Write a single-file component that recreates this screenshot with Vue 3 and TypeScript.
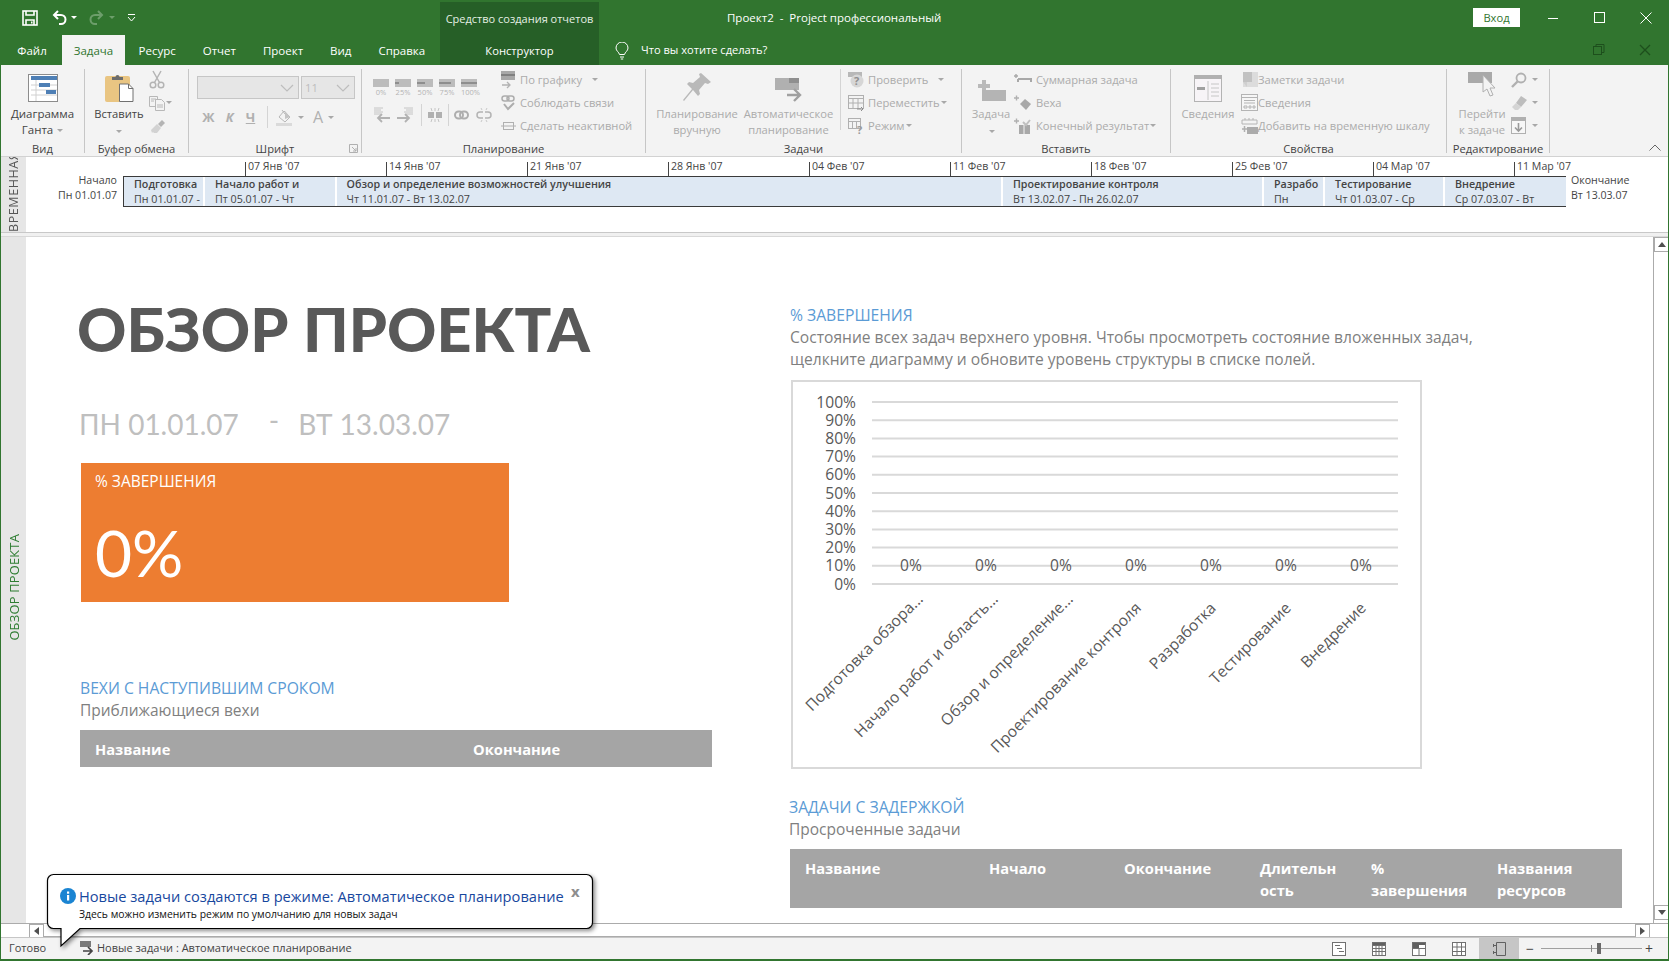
<script setup lang="ts">
interface Task { title: string; dates: string; from: number; to: number }
const tabs: string[] = ['Ресурс', 'Отчет', 'Проект', 'Вид', 'Справка']
const ticks: string[] = ["07 Янв '07", "14 Янв '07", "21 Янв '07", "28 Янв '07", "04 Фев '07", "11 Фев '07", "18 Фев '07", "25 Фев '07", "04 Мар '07", "11 Мар '07"]
const tasks: Task[] = [
  { title: 'Подготовка', dates: 'Пн 01.01.07 -', from: 123, to: 204 },
  { title: 'Начало работ и', dates: 'Пт 05.01.07 - Чт', from: 204, to: 335.5 },
  { title: 'Обзор и определение возможностей улучшения', dates: 'Чт 11.01.07 - Вт 13.02.07', from: 335.5, to: 1002 },
  { title: 'Проектирование контроля', dates: 'Вт 13.02.07 - Пн 26.02.07', from: 1002, to: 1263 },
  { title: 'Разрабо', dates: 'Пн', from: 1263, to: 1324 },
  { title: 'Тестирование', dates: 'Чт 01.03.07 - Ср', from: 1324, to: 1444 },
  { title: 'Внедрение', dates: 'Ср 07.03.07 - Вт', from: 1444, to: 1565 }
]
const progress: number[] = [0, 25, 50, 75, 100]
const axis: string[] = ['100%', '90%', '80%', '70%', '60%', '50%', '40%', '30%', '20%', '10%', '0%']
const cats: string[] = ['Подготовка обзора...', 'Начало работ и область...', 'Обзор и определение...', 'Проектирование контроля', 'Разработка', 'Тестирование', 'Внедрение']
const catTransform = (i: number): string => {
  const x = (i < 3 ? 131 : 124) + i * 75
  const y = i < 3 ? 218 : 227
  return `translate(${x} ${y}) rotate(-45)`
}
</script>

<template>
  <div class="win">
    <header class="titlebar">
      <div class="qat">
        <svg class="q-save" width="16" height="16" viewBox="0 0 16 16" fill="none" stroke="#fff" stroke-width="1.6"><rect x="1" y="1" width="14" height="14"/><path d="M4 1v4h8V1M4 15v-5h8v5"/><rect x="9" y="11.5" width="1.5" height="2" fill="#fff" stroke="none"/></svg>
        <svg class="q-undo" width="16" height="15" viewBox="0 0 16 15" fill="none" stroke="#fff" stroke-width="2"><path d="M6 1 2 5l4 4"/><path d="M2 5h7a4.5 4.5 0 0 1 0 9H7"/></svg>
        <span class="caret white"></span>
        <svg class="q-redo" width="16" height="15" viewBox="0 0 16 15" fill="none" stroke="#6d9e6b" stroke-width="2"><path d="M10 1l4 4-4 4"/><path d="M14 5H7a4.5 4.5 0 0 0 0 9h2"/></svg>
        <span class="caret faded"></span>
        <svg class="q-more" width="9" height="8" viewBox="0 0 9 8" fill="none" stroke="#fff"><path d="M1 .5h7M1 3l3.5 4L8 3"/></svg>
      </div>
      <div class="ctx-head">Средство создания отчетов</div>
      <div class="doc-title">Проект2&nbsp; -&nbsp; Project профессиональный</div>
      <div class="login">Вход</div>
      <svg class="w-min" width="12" height="12" viewBox="0 0 12 12" stroke="#fff"><path d="M1 6.5h10"/></svg>
      <svg class="w-max" width="12" height="12" viewBox="0 0 12 12" fill="none" stroke="#fff"><rect x=".5" y=".5" width="10" height="10"/></svg>
      <svg class="w-close" width="12" height="12" viewBox="0 0 12 12" stroke="#fff"><path d="M.5.5l11 11M11.5.5l-11 11"/></svg>
    </header>

    <nav class="tabs">
      <div class="tab file">Файл</div>
      <div class="tab active">Задача</div>
      <div v-for="t in tabs" :key="t" class="tab">{{ t }}</div>
      <div class="tab ctx">Конструктор</div>
      <svg class="bulb" width="14" height="18" viewBox="0 0 14 18" fill="none" stroke="#fff"><path d="M4.5 12.5C4 10 1 9 1 6a6 6 0 0 1 12 0c0 3-3 4-3.500 6.500z"/><path d="M5 15h4M5.800 17h2.400"/></svg>
      <div class="tell">Что вы хотите сделать?</div>
      <svg class="d-restore" width="12" height="12" viewBox="0 0 12 12" fill="none" stroke="#1d4f1c"><rect x=".5" y="2.500" width="8" height="8"/><path d="M3 2.500V.5h8v8H8.500"/></svg>
      <svg class="d-close" width="12" height="12" viewBox="0 0 12 12" stroke="#1d4f1c" stroke-width="1.300"><path d="M1 1l10 10M11 1 1 11"/></svg>
    </nav>

    <section class="ribbon">
      <div class="grp g-view">
        <div class="body center">
          <div class="big">
            <div class="big-ic">
              <svg width="30" height="28" viewBox="0 0 30 28"><rect x=".5" y=".5" width="29" height="27" fill="#fff" stroke="#8c8c8c"/><rect x="3" y="2" width="26" height="4" fill="#4e7fb5"/><path d="M8 6v21M3 11h26M3 16h26M3 21h26" stroke="#d0d0d0"/><rect x="11" y="9" width="11" height="4" fill="#4e7fb5"/><rect x="18" y="16" width="10" height="4" fill="#4e7fb5"/></svg>
            </div>
            <div class="big-t dark wide">Диаграмма<br>Ганта <span class="caret"></span></div>
          </div>
        </div>
        <div class="lbl">Вид</div>
      </div>

      <div class="grp g-clip">
        <div class="body">
          <div class="big paste">
            <div class="big-ic">
              <svg width="30" height="28" viewBox="0 0 30 28"><rect x="1" y="2" width="25" height="26" rx="2" fill="#e9c582"/><path d="M8 5V3h3.500a2 2 0 0 1 4 0H19v3H8z" fill="#6c6c6c"/><path d="M15.500 10h9l4.500 4.500V27.500h-13.500z" fill="#fff" stroke="#707070"/><path d="M24.500 10v4.500H29" fill="none" stroke="#707070"/></svg>
            </div>
            <div class="big-t dark">Вставить<br><span class="caret"></span></div>
          </div>
          <div class="col clip-col">
            <div class="srow"><svg width="16" height="19" viewBox="0 0 16 19" fill="none" stroke="#b4b4b4" stroke-width="1.500"><path d="M4 1l6.500 11.500M12 1 5.500 12.500"/><circle cx="4" cy="15" r="2.800"/><circle cx="12" cy="15" r="2.800"/></svg></div>
            <div class="srow"><svg width="16" height="16" viewBox="0 0 16 16" fill="#f3f3f3" stroke="#b8b8b8"><path d="M.5 1.500h8v10h-8z"/><path d="M6.500 4.500h6l3 3v8h-9z"/><path d="M2 4h5M2 6h3M8 10h6M8 12h6" /></svg><span class="caret"></span></div>
            <div class="srow"><svg width="18" height="16" viewBox="0 0 18 16"><path d="M9 6l4-4 3 3-4 4z" fill="#b4b4b4"/><path d="M2 12l6-6 4 4-4 5H5l-1-1-1 1z" fill="#d2d2d2"/></svg></div>
          </div>
        </div>
        <div class="lbl">Буфер обмена</div>
      </div>

      <div class="grp g-font">
        <div class="body colb">
          <div class="combos">
            <div class="combo c-name"><svg width="14" height="8" viewBox="0 0 14 8" fill="none" stroke="#bdbdbd" stroke-width="1.200"><path d="M1 1l6 6 6-6"/></svg></div>
            <div class="combo c-size"><span>11</span><svg width="14" height="8" viewBox="0 0 14 8" fill="none" stroke="#bdbdbd" stroke-width="1.200"><path d="M1 1l6 6 6-6"/></svg></div>
          </div>
          <div class="fmt">
            <b class="f-b">Ж</b><b class="f-i">К</b><b class="f-u">Ч</b><i class="vsep f-s"></i>
            <svg class="f-p" width="17" height="17" viewBox="0 0 17 17" fill="none" stroke="#b8b8b8"><path d="M3 8l5-6 6 6-5 5z"/><path d="M6 1l3 4"/><path d="M9 2l5 6-5 2z" fill="#c4c4c4" stroke="none"/><rect x="0" y="14" width="16" height="3" fill="#dadada" stroke="none"/></svg>
            <span class="caret f-c1"></span>
            <span class="f-a">А</span>
            <span class="caret f-c2"></span>
          </div>
        </div>
        <div class="lbl">Шрифт</div>
        <svg class="launch" width="9" height="9" viewBox="0 0 9 9" fill="none" stroke="#b0b0b0"><path d="M.5 8.500V.5h8v8zM3 3l4 4M7 4v3H4"/></svg>
      </div>

      <div class="grp g-plan">
        <div class="body">
          <div class="col plan-left">
            <div class="prog-row">
              <div v-for="p in progress" :key="p" class="prog">
                <div class="prog-bar"><i :style="{ width: p + '%' }"></i></div>
                <span>{{ p }}%</span>
              </div>
            </div>
            <div class="link-row">
              <svg width="18" height="18" viewBox="0 0 18 18" fill="none" stroke="#c4c4c4"><path d="M1 2h9M1 4h7M1 6h9M1 8h7"/><path d="M17 12H5M9 8l-4 4 4 4" stroke="#b2b2b2" stroke-width="1.800"/></svg>
              <svg class="mr" width="18" height="18" viewBox="0 0 18 18" fill="none" stroke="#c4c4c4"><path d="M8 2h9M10 4h7M8 6h9M10 8h7"/><path d="M1 12h12M9 8l4 4-4 4" stroke="#b2b2b2" stroke-width="1.800"/></svg>
              <i class="vsep"></i>
              <svg width="16" height="16" viewBox="0 0 16 16"><rect x="1" y="5" width="6" height="6" fill="#b0b0b0"/><rect x="9" y="5" width="6" height="6" fill="#b0b0b0"/><path d="M4 1l1 3M12 1l-1 3M4 15l1-3M12 15l-1-3M8 1v3M8 12v3" stroke="#c4c4c4"/></svg>
              <i class="vsep"></i>
              <svg width="15" height="10" viewBox="0 0 15 10" fill="none" stroke="#aeaeae" stroke-width="2"><rect x="1" y="1.500" width="8" height="7" rx="3.500"/><rect x="6" y="1.500" width="8" height="7" rx="3.500"/></svg>
              <svg class="ml" width="16" height="16" viewBox="0 0 16 16" fill="none" stroke="#b4b4b4" stroke-width="1.500"><path d="M7 5H4a3 3 0 0 0 0 6h3M9 5h3a3 3 0 0 1 0 6H9"/><path d="M5 1l1 2M11 1l-1 2M5 15l1-2M11 15l-1-2" stroke-width="1" stroke="#c8c8c8"/></svg>
            </div>
          </div>
          <div class="col">
            <div class="srow t"><svg width="15" height="19" viewBox="0 0 15 19"><rect x="0" y="1" width="14" height="9" fill="#a8a8a8"/><rect x="0" y="4" width="14" height="2" fill="#808080"/><path d="M1 15h8M6 12l3 3-3 3" fill="none" stroke="#b2b2b2" stroke-width="1.300"/></svg><span class="st">По графику</span><span class="caret sp"></span></div>
            <div class="srow t"><svg width="15" height="16" viewBox="0 0 15 16" fill="none" stroke="#adadad" stroke-width="1.500"><rect x="1" y="1" width="7" height="5" rx="2.500"/><rect x="6" y="1" width="7" height="5" rx="2.500"/><path d="M3 9l4 5 6-6" stroke-width="2"/></svg><span class="st">Соблюдать связи</span></div>
            <div class="srow t"><svg width="15" height="12" viewBox="0 0 15 12" fill="none" stroke="#b0b0b0"><rect x="2.500" y="2.500" width="10" height="7"/><path d="M0 6h15"/></svg><span class="st">Сделать неактивной</span></div>
          </div>
        </div>
        <div class="lbl">Планирование</div>
      </div>

      <div class="grp g-task">
        <div class="body">
          <div class="big b-man">
            <div class="big-ic">
              <svg width="32" height="30" viewBox="0 0 32 30"><path d="M20 1l10 9-3 2-3-1-6 7 1 4-2 2-5-6-9 11-1-1 9-11-5-5 2-2 4 1 7-6-1-3z" fill="#b9b9b9"/></svg>
            </div>
            <div class="big-t">Планирование<br>вручную</div>
          </div>
          <div class="big b-auto">
            <div class="big-ic">
              <svg width="28" height="24" viewBox="0 0 28 24"><rect x="0" y="0" width="24" height="12" fill="#b0b0b0"/><rect x="14" y="0" width="10" height="5" fill="#8f8f8f"/><path d="M12 17h12M19 11l6 6-6 6" fill="none" stroke="#a0a0a0" stroke-width="2.400"/></svg>
            </div>
            <div class="big-t">Автоматическое<br>планирование</div>
          </div>
          <i class="inner-sep"></i>
          <div class="col task-col">
            <div class="srow t"><svg width="16" height="17" viewBox="0 0 16 17"><rect x="0" y="1" width="14" height="5" fill="#b8b8b8"/><circle cx="9" cy="10" r="6.500" fill="#d6d6d6"/><text x="6" y="14" font-size="11" font-weight="700" font-family="Open Sans" fill="#8f8f8f">?</text></svg><span class="st">Проверить</span><span class="caret sp"></span></div>
            <div class="srow t"><svg width="16" height="16" viewBox="0 0 16 16" fill="#f3f3f3" stroke="#b0b0b0"><rect x=".5" y=".5" width="15" height="13"/><path d="M.5 3.500h15M.5 8h15M5 3.500V13.500M10 3.500V13.500"/><path d="M9 14h6M13 12l2 2-2 2" stroke="#8d8d8d"/></svg><span class="st">Переместить</span><span class="caret"></span></div>
            <div class="srow t"><svg width="16" height="16" viewBox="0 0 16 16" fill="none" stroke="#b0b0b0"><rect x=".5" y=".5" width="12" height="10"/><path d="M.5 3.500h12M4.500 3.500v7M8.500 3.500v7"/><text x="9" y="15.500" font-size="11" font-weight="700" font-family="Open Sans" fill="#9a9a9a" stroke="none">?</text></svg><span class="st">Режим</span><span class="caret"></span></div>
          </div>
        </div>
        <div class="lbl">Задачи</div>
      </div>

      <div class="grp g-ins">
        <div class="body">
          <div class="big b-newt">
            <div class="big-ic">
              <svg width="30" height="22" viewBox="0 0 30 22"><path d="M6 0h4v4h4v4h-4v4H6V8H2V4h4z" fill="#b9b9b9"/><rect x="6" y="10" width="24" height="11" fill="#b4b4b4"/></svg>
            </div>
            <div class="big-t">Задача<br><span class="caret"></span></div>
          </div>
          <div class="col ins-col">
            <div class="srow t"><svg width="18" height="14" viewBox="0 0 18 14" fill="none" stroke="#a8a8a8" stroke-width="1.400"><path d="M0 3h4M2 1v4"/><path d="M4 6h13v3M4 6v3" stroke-width="2"/></svg><span class="st">Суммарная задача</span></div>
            <div class="srow t"><svg width="18" height="16" viewBox="0 0 18 16"><path d="M0 3h5M2.500 .5v5" stroke="#b0b0b0" stroke-width="1.400"/><path d="M11 4l6 5-5 6-6-6z" fill="#a8a8a8"/></svg><span class="st">Веха</span></div>
            <div class="srow t"><svg width="18" height="16" viewBox="0 0 18 16"><path d="M0 3h5M2.500 .5v5" stroke="#b0b0b0" stroke-width="1.400"/><rect x="5" y="7" width="11" height="9" fill="#a8a8a8"/><path d="M9 4l3 3 4-5" stroke="#c0c0c0" stroke-width="2" fill="none"/><path d="M10 7v9" stroke="#f3f3f3"/></svg><span class="st">Конечный результат</span><span class="caret"></span></div>
          </div>
        </div>
        <div class="lbl">Вставить</div>
      </div>

      <div class="grp g-prop">
        <div class="body">
          <div class="big b-info">
            <div class="big-ic">
              <svg width="28" height="27" viewBox="0 0 28 27" fill="#f7f4f7"><rect x=".5" y=".5" width="27" height="26" stroke="#b3b3b3"/><rect x="0" y="0" width="28" height="4" fill="#b0b0b0"/><rect x="3" y="12" width="8" height="3" fill="#a0a0a0"/><path d="M14 6v19M17 9h8M17 13h8M17 17h8M17 21h8" stroke="#c6c6c6" fill="none"/></svg>
            </div>
            <div class="big-t">Сведения</div>
          </div>
          <div class="col prop-col">
            <div class="srow t"><svg width="17" height="16" viewBox="0 0 17 16"><rect x="2" y="0" width="15" height="15" fill="#dcdcdc"/><path d="M2 0h9v10H2z" fill="#c2c2c2"/><path d="M2 10h4v5z" fill="#cfcfcf"/></svg><span class="st">Заметки задачи</span></div>
            <div class="srow t"><svg width="17" height="17" viewBox="0 0 17 17" fill="#f6f6f6" stroke="#b4b4b4"><rect x=".5" y=".5" width="16" height="16"/><path d="M.5 3.500h16M3 6.500h11M3 9h11" /><path d="M3 12h3v2H3zM8 12h2v2H8zM12 12h2v2h-2z"/></svg><span class="st">Сведения</span></div>
            <div class="srow t"><svg width="17" height="17" viewBox="0 0 17 17"><path d="M1 3h15v4H1z M4 1v2M8 1v2M12 1v2" fill="none" stroke="#b4b4b4"/><rect x="6" y="10" width="11" height="7" fill="#ababab"/><path d="M1 12h5M3.500 9v6" stroke="#b0b0b0" stroke-width="1.500"/></svg><span class="st">Добавить на временную шкалу</span></div>
          </div>
        </div>
        <div class="lbl">Свойства</div>
      </div>

      <div class="grp g-edit">
        <div class="body">
          <div class="big b-go">
            <div class="big-ic">
              <svg width="28" height="30" viewBox="0 0 28 30"><rect x="0" y="0" width="24" height="11" fill="#a9a9a9"/><path d="M15 3v17l4-3 3 7 3-1-3-7h5z" fill="#f3f3f3" stroke="#b0b0b0"/></svg>
            </div>
            <div class="big-t">Перейти<br>к задаче</div>
          </div>
          <div class="col edit-col">
            <div class="srow"><svg width="16" height="16" viewBox="0 0 16 16" fill="none" stroke="#b0b0b0" stroke-width="1.800"><circle cx="10" cy="6" r="4.500"/><path d="M6.500 9.500 1 15" stroke-width="2.400"/></svg><span class="caret sp2"></span></div>
            <div class="srow"><svg width="16" height="14" viewBox="0 0 16 14"><path d="M10 0l6 4-6 7-5-4z" fill="#bdbdbd"/><path d="M5 7l5 4-3 3H4L1 11z" fill="#d4d4d4"/></svg><span class="caret sp2"></span></div>
            <div class="srow"><svg width="16" height="17" viewBox="0 0 16 17" fill="#f7f7f7" stroke="#b0b0b0"><rect x=".5" y=".5" width="14" height="16"/><rect x=".5" y=".5" width="14" height="3" fill="#b0b0b0"/><path d="M7.500 6v8M4 10.500l3.500 3.500 3.500-3.500" fill="none" stroke="#9a9a9a" stroke-width="1.600"/></svg><span class="caret sp2"></span></div>
          </div>
        </div>
        <div class="lbl">Редактирование</div>
      </div>
      <svg class="collapse" width="12" height="7" viewBox="0 0 12 7" fill="none" stroke="#666"><path d="M.5 6.500 6 1l5.500 5.500"/></svg>
    </section>

    <section class="timeline">
      <div class="side tl-side"><span>ВРЕМЕННАЯ</span></div>
      <div class="tl-start">Начало<br>Пн 01.01.07</div>
      <div class="tl-mid">
        <div class="ticks"><div v-for="t in ticks" :key="t" class="tick">{{ t }}</div></div>
        <div class="bar">
          <div v-for="t in tasks" :key="t.title" class="seg" :style="{ width: (t.to - t.from) + 'px' }">
            <b>{{ t.title }}</b>
            <span>{{ t.dates }}</span>
          </div>
        </div>
      </div>
      <div class="tl-end">Окончание<br>Вт 13.03.07</div>
    </section>
    <div class="split"></div>

    <section class="report-row">
      <div class="side rep-side"><span>ОБЗОР ПРОЕКТА</span></div>
      <div class="canvas">
        <div class="left">
          <h1>ОБЗОР ПРОЕКТА</h1>
          <div class="dates"><span>ПН 01.01.07</span><span class="dash">-</span><span>ВТ 13.03.07</span></div>
          <div class="kpi">
            <div class="kpi-t">% ЗАВЕРШЕНИЯ</div>
            <div class="kpi-v">0%</div>
          </div>
          <h2 class="h-ms">ВЕХИ С НАСТУПИВШИМ СРОКОМ</h2>
          <p class="sub">Приближающиеся вехи</p>
          <div class="thead t-ms"><span>Название</span><span>Окончание</span></div>
        </div>
        <div class="right">
          <h2 class="h-pc">% ЗАВЕРШЕНИЯ</h2>
          <p class="para">Состояние всех задач верхнего уровня. Чтобы просмотреть состояние вложенных задач,<br>щелкните диаграмму и обновите уровень структуры в списке полей.</p>
          <svg class="chart" width="627" height="385" viewBox="0 0 627 385">
            <g v-for="(a, i) in axis" :key="a">
              <line x1="79" x2="605" :y1="20 + i * 18.2" :y2="20 + i * 18.2" stroke="#d9d9d9" stroke-width="2"/>
              <text x="63" :y="25.500 + i * 18.2" text-anchor="end" class="ct">{{ a }}</text>
            </g>
            <g v-for="(c, i) in cats" :key="c">
              <text :x="118 + i * 75" y="189" text-anchor="middle" class="ct">0%</text>
              <text text-anchor="end" class="ct" :transform="catTransform(i)">{{ c }}</text>
            </g>
          </svg>
          <h2 class="h-late">ЗАДАЧИ С ЗАДЕРЖКОЙ</h2>
          <p class="sub sub-late">Просроченные задачи</p>
          <div class="thead t-late">
            <span>Название</span><span>Начало</span><span>Окончание</span><span>Длительн<br>ость</span><span>%<br>завершения</span><span>Названия<br>ресурсов</span>
          </div>
        </div>
      </div>
      <div class="vscroll">
        <div class="sb-btn"><svg width="8" height="5" viewBox="0 0 8 5"><path d="M0 5l4-5 4 5z" fill="#505050"/></svg></div>
        <div class="sb-track"></div>
        <div class="sb-btn"><svg width="8" height="5" viewBox="0 0 8 5"><path d="M0 0l4 5 4-5z" fill="#505050"/></svg></div>
      </div>
    </section>

    <div class="hscroll">
      <div class="sb-btn h"><svg width="5" height="8" viewBox="0 0 5 8"><path d="M5 0 0 4l5 4z" fill="#505050"/></svg></div>
      <div class="h-track"></div>
      <div class="sb-btn h"><svg width="5" height="8" viewBox="0 0 5 8"><path d="M0 0l5 4-5 4z" fill="#505050"/></svg></div>
    </div>

    <footer class="status">
      <span class="ready">Готово</span>
      <svg class="st-ic" width="14" height="14" viewBox="0 0 14 14"><rect x="0" y="0" width="11" height="6" fill="#7a7a7a"/><path d="M3 10h9M8 6l4 4-4 4" fill="none" stroke="#444" stroke-width="1.700"/></svg>
      <span class="st-msg">Новые задачи : Автоматическое планирование</span>
      <div class="views">
        <svg width="14" height="14" viewBox="0 0 14 14" fill="#fff" stroke="#707070"><rect x=".5" y=".5" width="13" height="13"/><path d="M3 3.500h5M5 6.500h5M7 9.500h5"/></svg>
        <svg width="14" height="14" viewBox="0 0 14 14" fill="#fff" stroke="#707070"><rect x=".5" y=".5" width="13" height="13"/><rect x=".5" y=".5" width="13" height="3" fill="#606060"/><path d="M4 3.500v10M7 3.500v10M10 3.500v10M.5 6.500h13M.5 9.500h13"/></svg>
        <svg width="14" height="14" viewBox="0 0 14 14" fill="#fff" stroke="#707070"><rect x=".5" y=".5" width="13" height="13"/><rect x=".5" y=".5" width="13" height="6" fill="#606060"/><rect x="7" y="3" width="6" height="3" fill="#fff" stroke="none"/><path d="M7 6.500v7"/></svg>
        <svg width="14" height="14" viewBox="0 0 14 14" fill="#fff" stroke="#707070"><rect x=".5" y=".5" width="13" height="13"/><path d="M5 .5v13M9.500 .5v13M.5 5h13M.5 9.500h13"/></svg>
        <div class="view-on"><svg width="14" height="14" viewBox="0 0 14 14" fill="none" stroke="#606060"><path d="M4.500 .5h9v13h-9zM4.500 3.500H1.500M4.500 10.500H1.500M1.500 2v3M1.500 9v3"/></svg></div>
      </div>
      <div class="zoom">
        <span class="z-sign">−</span>
        <div class="z-line"><i class="z-mid"></i><i class="z-thumb"></i></div>
        <span class="z-sign">+</span>
      </div>
    </footer>

    <div class="callout">
      <svg class="callout-bg" width="552" height="80" viewBox="0 0 552 80"><path d="M8.500 1.500h533a6 6 0 0 1 6 6v42a6 6 0 0 1-6 6H35L16 73V55.500H8.500a6 6 0 0 1-6-6v-42a6 6 0 0 1 6-6z" fill="#fff" stroke="#000" stroke-width="1.200"/></svg>
      <div class="call-head">
        <svg width="16" height="16" viewBox="0 0 16 16"><circle cx="8" cy="8" r="8" fill="#1a84d2"/><rect x="7" y="7" width="2.200" height="5.500" fill="#fff"/><rect x="7" y="3.500" width="2.200" height="2.200" fill="#fff"/></svg>
        <span class="call-t">Новые задачи создаются в режиме: Автоматическое планирование</span>
        <span class="call-x">x</span>
      </div>
      <div class="call-s">Здесь можно изменить режим по умолчанию для новых задач</div>
    </div>
  </div>
</template>

<style>
html, body { margin: 0; background: #fff; }
</style>

<style scoped>
* { box-sizing: border-box; }
.win { position: relative; width: 1669px; height: 961px; overflow: hidden; border: 1px solid #31752f; border-top: 0; border-bottom-width: 2px; background: #fff; font-family: "Open Sans", "Noto Sans", sans-serif; font-size: 11.2px; color: #444; display: flex; flex-direction: column; }

.titlebar { flex: none; height: 35px; margin: 0 -1px; background: #31752f; display: flex; align-items: center; color: #fff; }
.qat { width: 440px; height: 35px; display: flex; align-items: center; padding-left: 22px; flex: none; }
.q-undo { margin-left: 14px; }
.q-redo { margin-left: 11px; }
.q-more { margin-left: 12px; }
.caret { display: inline-block; width: 0; height: 0; border: 3px solid transparent; border-top: 3.500px solid #a8a8a8; border-bottom: 0; vertical-align: middle; margin-left: 1px; }
.caret.white { border-top-color: #fff; margin-left: 3px; }
.caret.faded { border-top-color: #6d9e6b; margin-left: 5px; }
.ctx-head { width: 159px; height: 33px; margin-top: 2px; flex: none; background: #265f27; display: flex; align-items: center; justify-content: center; font-size: 11px; color: #e4efe4; white-space: nowrap; padding-bottom: 1px; }
.doc-title { margin-left: 128px; font-size: 11.500px; white-space: pre; width: 746px; flex: none; }
.login { width: 47px; height: 19px; background: #fff; color: #31752f; display: flex; align-items: center; justify-content: center; font-size: 11.200px; flex: none; }
.w-min { margin-left: 27px; flex: none; }
.w-max { margin-left: 35px; flex: none; }
.w-close { margin-left: 34px; flex: none; }

.tabs { flex: none; height: 30px; margin: 0 -1px; background: #31752f; display: flex; align-items: center; color: #fff; font-size: 11.500px; position: relative; }
.tab { height: 30px; display: flex; align-items: center; padding: 0 13.500px; white-space: nowrap; }
.tab.file { margin-left: 2px; width: 60px; justify-content: center; padding: 0; }
.tab.active { background: #f3f3f3; color: #31752f; width: 63px; justify-content: center; padding: 0; }
.tab.ctx { background: #265f27; width: 159px; justify-content: center; padding: 0; position: absolute; left: 440px; top: 0; font-size: 11.200px; }
.bulb { position: absolute; left: 615px; top: 7px; }
.tell { position: absolute; left: 641px; top: 7px; white-space: nowrap; font-size: 11.100px; }
.d-restore { position: absolute; left: 1593px; top: 9px; }
.d-close { position: absolute; left: 1639px; top: 9px; }

.ribbon { flex: none; height: 92px; background: #f3f3f3; border-bottom: 1px solid #d2d2d2; display: flex; padding-top: 4px; position: relative; }
.grp { height: 84px; border-right: 1px solid #c6c6c6; display: flex; flex-direction: column; position: relative; flex: none; }
.g-view { width: 84px; }
.g-clip { width: 104px; }
.g-font { width: 173px; }
.g-plan { width: 284px; }
.g-task { width: 316px; }
.g-ins { width: 209px; }
.g-prop { width: 276px; }
.g-edit { width: 103px; }
.body { height: 72px; display: flex; flex: none; }
.body.center { justify-content: center; }
.body.colb { flex-direction: column; }
.lbl { height: 12px; line-height: 16px; text-align: center; color: #444; white-space: nowrap; }
.big { display: flex; flex-direction: column; align-items: center; flex: none; }
.big-ic { height: 37px; display: flex; align-items: flex-end; justify-content: center; padding-bottom: 4px; }
.big-t { line-height: 16px; text-align: center; color: #ababab; white-space: nowrap; }
.big-t.dark { color: #444; }
.big-t.wide { font-size: 11.500px; }
.col { display: flex; flex-direction: column; flex: none; margin-top: -1px; }
.srow { height: 23px; display: flex; align-items: center; white-space: nowrap; color: #ababab; }
.srow.t svg { flex: none; }
.st { margin-left: 4px; }
.sp { margin-left: 10px; }
.sp2 { margin-left: 5px; }
.paste { margin-left: 9px; width: 50px; }
.clip-col { margin-left: 5px; }
.combos { display: flex; margin: 7px 0 0 8px; height: 23px; }
.combo { background: #e6e6e6; border: 1px solid #c6c6c6; display: flex; align-items: center; justify-content: flex-end; padding-right: 4px; }
.c-name { width: 102px; }
.c-size { width: 54px; margin-left: 2px; justify-content: space-between; padding-left: 3px; color: #bdbdbd; }
.fmt { display: flex; align-items: center; height: 22px; margin: 7px 0 0 8px; color: #b0b0b0; }
.fmt b { font-size: 13px; width: 21px; text-align: center; }
.f-b { margin-left: 1px; }
.f-i { font-style: italic; }
.f-u { text-decoration: underline; }
.vsep { display: block; width: 1px; height: 22px; background: #d4d4d4; flex: none; }
.f-s { margin-left: 6px; }
.f-p { margin-left: 8px; }
.f-c1 { margin-left: 5px; }
.f-a { font-size: 16px; margin-left: 9px; }
.f-c2 { margin-left: 5px; }
.launch { position: absolute; right: 3px; bottom: 0; }
.plan-left { width: 139px; padding-left: 11px; }
.prog-row { display: flex; height: 29px; padding-top: 11px; }
.prog { width: 22px; display: flex; flex-direction: column; }
.prog-bar { width: 16px; height: 8px; background: #bcbcbc; display: flex; align-items: center; }
.prog-bar i { height: 2px; background: #8e8e8e; display: block; }
.prog span { font-size: 7.500px; line-height: 10px; color: #b4b4b4; width: 16px; text-align: center; white-space: nowrap; }
.link-row { display: flex; align-items: center; height: 22px; margin-top: 7px; gap: 5px; }
.mr { margin-right: 2px; }
.ml { margin-left: 2px; }
.b-man { margin-left: 10px; width: 82px; }
.b-auto { margin-left: 3px; width: 95px; }
.b-newt { margin-left: 14px; width: 30px; }
.b-info { margin-left: 14px; width: 46px; }
.b-go { margin-left: 20px; width: 30px; }
.inner-sep { display: block; width: 1px; height: 61px; background: #d4d4d4; margin-left: 4px; flex: none; }
.task-col { margin-left: 7px; }
.ins-col { margin-left: 8px; }
.prop-col { margin-left: 10px; }
.prop-col .st { margin-left: 0; }
.edit-col { margin-left: 14px; }
.collapse { position: absolute; left: 1648px; top: 79px; }

.timeline { flex: none; height: 76px; display: flex; border-bottom: 1px solid #c8c8c8; }
.side { width: 25px; background: #e6e6e6; overflow: hidden; flex: none; display: flex; justify-content: center; }
.side span { writing-mode: vertical-rl; transform: rotate(180deg); white-space: nowrap; }
.tl-side span { font-size: 12.500px; letter-spacing: .6px; color: #555; }
.tl-start { width: 97px; padding: 15.500px 6px 0 0; text-align: right; line-height: 15px; flex: none; font-size: 10.600px; }
.tl-mid { width: 1443px; flex: none; }
.ticks { display: flex; height: 19px; padding-left: 122px; }
.tick { width: 141px; flex: none; height: 14px; margin-top: 5px; border-left: 1px solid #444; padding-left: 2px; line-height: 8px; font-size: 10.600px; white-space: nowrap; }
.bar { height: 30.500px; display: flex; border: 1px solid #3a3a3a; background: #fff; }
.seg { background: #dee8f3; border-right: 2px solid #fff; padding: 0 0 0 10px; display: flex; flex-direction: column; overflow: hidden; white-space: nowrap; flex: none; font-size: 10.700px; line-height: 15px; }
.seg:last-child { border-right: 0; }
.seg b { font-weight: 600; }
.tl-end { padding: 15.500px 0 0 5px; line-height: 15px; white-space: nowrap; font-size: 10.600px; }
.split { flex: none; height: 4px; background: #f0f0f0; border-bottom: 1px solid #d8d8d8; }

.report-row { flex: none; height: 686px; display: flex; }
.rep-side { height: 100%; align-items: center; }
.rep-side span { color: #2e7d32; font-size: 12.900px; letter-spacing: .2px; margin-top: 14px; }
.canvas { width: 1627px; flex: none; display: flex; overflow: hidden; }
.left { width: 764px; padding-left: 54px; flex: none; }
h1 { margin: 57px 0 0 -3px; font-family: Lato, "Open Sans", sans-serif; font-weight: 900; font-size: 61px; line-height: 70px; color: #595959; white-space: nowrap; }
.dates { margin: 42px 0 0 -1px; height: 36px; line-height: 36px; font-family: Lato, "Open Sans", sans-serif; font-size: 28px; color: #bfbfbf; display: flex; }
.dash { margin: -4px 19px 0 30px; }
.kpi { margin: 21px 0 0 1px; width: 428px; height: 139px; background: #ed7d31; color: #fff; padding: 8px 14px; }
.kpi-t { font-size: 15.500px; line-height: 20px; }
.kpi-v { font-family: Lato, "Open Sans", sans-serif; font-size: 64px; line-height: 76px; margin-top: 24px; }
h2 { margin: 0; font-weight: 400; font-size: 15.700px; line-height: 22px; color: #5b9bd5; white-space: nowrap; }
.h-ms { margin-top: 75px; }
.sub { margin: 0; font-size: 15.500px; line-height: 22px; color: #7f7f7f; }
.thead { background: #a5a5a5; color: #fff; font-weight: 700; font-size: 14.700px; }
.t-ms { margin-top: 9px; width: 632px; height: 37px; display: grid; grid-template-columns: 378px 1fr; padding-left: 15px; align-items: center; }
.right { flex: none; width: 860px; }
.h-pc { margin-top: 67px; }
.para { margin: 0; font-size: 15.600px; line-height: 22px; color: #7f7f7f; white-space: nowrap; }
.chart { display: block; box-sizing: content-box; margin: 10px 0 0 1px; border: 2px solid #d9d9d9; }
.ct { font-family: "Open Sans", sans-serif; font-size: 15.600px; fill: #595959; }
.h-late { margin: 27px 0 0 -1px; }
.sub-late { margin: 0 0 0 -1px; }
.t-late { margin-top: 9px; width: 832px; height: 59px; display: grid; grid-template-columns: 184px 135px 136px 111px 126px 1fr; padding: 8px 0 0 15px; line-height: 22px; }
.vscroll { flex: 1; display: flex; flex-direction: column; border-left: 1px solid #ababab; padding-bottom: 3px; }
.sb-btn { flex: none; width: 15px; height: 15px; background: #fff; border: 1px solid #ababab; display: flex; align-items: center; justify-content: center; }
.sb-btn.h { width: 15px; height: 14px; }
.sb-track { flex: 1; border-right: 1px solid #ababab; }

.hscroll { flex: none; height: 14px; padding: 0 18px 0 28px; display: flex; background: #fff; border-top: 1px solid #ababab; }
.h-track { flex: 1; border-bottom: 1px solid #ababab; }

.status { flex: 1; background: #f3f3f3; display: flex; align-items: center; border-top: 1px solid #c6c6c6; padding-bottom: 2px; font-size: 11px; color: #444; position: relative; }
.ready { margin-left: 8px; width: 71px; }
.st-ic { flex: none; }
.st-msg { margin-left: 3px; }
.views { position: absolute; left: 1331px; top: 0; height: 21px; display: flex; align-items: center; gap: 26px; }
.view-on { margin-left: -13px; width: 40px; height: 21px; background: #c6c6c6; display: flex; align-items: center; justify-content: center; }
.zoom { position: absolute; left: 1524px; top: 0; height: 21px; display: flex; align-items: center; }
.z-sign { font-size: 14px; width: 10px; text-align: center; color: #444; line-height: 20px; }
.z-line { width: 101px; height: 1px; background: #a0a0a0; margin: 0 2px 0 6px; position: relative; }
.z-mid { position: absolute; left: 50px; top: -3px; width: 1px; height: 7px; background: #888; }
.z-thumb { position: absolute; left: 56px; top: -5px; width: 4px; height: 11px; background: #6a6a6a; }

.callout { position: absolute; left: 44px; top: 873px; width: 552px; height: 80px; }
.callout-bg { position: absolute; left: 0; top: 0; filter: drop-shadow(2px 2px 2px rgba(0,0,0,.45)); }
.call-head { position: relative; display: flex; align-items: center; margin: 14px 0 0 15px; height: 18px; }
.call-t { margin-left: 3px; font-size: 14.650px; color: #17479e; white-space: nowrap; }
.call-x { position: absolute; left: 511px; top: -6px; color: #8e8e8e; font-weight: 700; font-size: 15px; }
.call-s { position: relative; margin: 2px 0 0 34px; font-size: 10.400px; line-height: 15px; color: #111; white-space: nowrap; }
</style>
